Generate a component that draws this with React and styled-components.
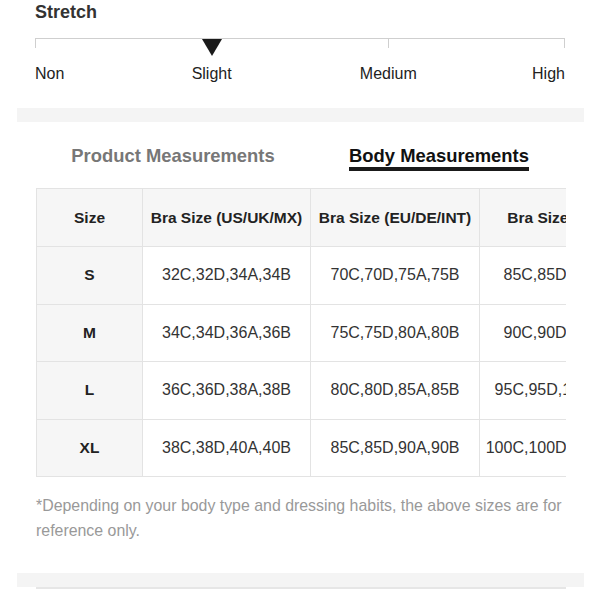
import React from "react";
import styled, { createGlobalStyle } from "styled-components";

const Global = createGlobalStyle`
  html, body { margin: 0; padding: 0; background: #fff; }
  body { font-family: "Liberation Sans", Arial, sans-serif; color: #222; }
`;

const Page = styled.div`
  width: 600px;
  height: 600px;
  overflow: hidden;
  display: flex;
  flex-direction: column;
`;

const StretchSection = styled.section`
  padding: 2px 35px 0 35px;
  display: flex;
  flex-direction: column;
`;

const Title = styled.h2`
  margin: 0;
  font-size: 18px;
  line-height: 20px;
  font-weight: bold;
  color: #333;
`;

const Scale = styled.div`
  position: relative;
  margin-top: 16px;
  display: grid;
  grid-template-columns: repeat(3, 1fr);
  height: 18px;
`;

const Segment = styled.div`
  height: 9px;
  border-top: 1px solid #cfcfcf;
  border-left: 1px solid #cfcfcf;
  border-right: ${(p) => (p.$last ? "1px solid #cfcfcf" : "none")};
`;

const Marker = styled.div`
  position: absolute;
  top: 1px;
  left: ${(p) => p.$pos};
  transform: translateX(-50%);
  width: 0;
  height: 0;
  border-left: 10px solid transparent;
  border-right: 10px solid transparent;
  border-top: 17px solid #1a1a1a;
`;

const Labels = styled.div`
  display: flex;
  justify-content: space-between;
  margin-top: 8px;
  height: 20px;
`;

const Label = styled.div`
  width: 0;
  display: flex;
  justify-content: ${(p) => p.$align};
  white-space: nowrap;
  font-size: 16px;
  line-height: 20px;
  color: #222;
`;

const Band = styled.div`
  margin: ${(p) => p.$mt}px 16px 0 17px;
  height: 14px;
  background: #f4f4f4;
  flex-shrink: 0;
`;

const Tabs = styled.div`
  display: flex;
  margin-top: 23px;
  height: 26px;
`;

const Tab = styled.div`
  position: relative;
  width: ${(p) => p.$w}px;
  display: flex;
  justify-content: center;
`;

const TabText = styled.span`
  font-size: 18.4px;
  line-height: 22px;
  font-weight: bold;
  color: ${(p) => (p.$active ? "#111" : "#777")};
  padding-bottom: 1px;
  border-bottom: ${(p) => (p.$active ? "4px solid #1a1a1a" : "4px solid transparent")};
`;

const TableClip = styled.div`
  margin: 17px 0 0 36px;
  width: 530px;
  overflow: hidden;
  flex-shrink: 0;
`;

const Table = styled.table`
  border-collapse: collapse;
  table-layout: fixed;
  width: 620px;
`;

const Th = styled.th`
  height: 57px;
  padding: 0;
  background: #f6f6f6;
  border: 1px solid #e3e3e3;
  font-size: 15.5px;
  font-weight: bold;
  color: #222;
  text-align: center;
  white-space: nowrap;
`;

const Td = styled.td`
  height: 56.5px;
  padding: 0;
  background: ${(p) => (p.$head ? "#f6f6f6" : "#fff")};
  border: 1px solid #e3e3e3;
  font-size: ${(p) => (p.$head ? "15.5px" : "16px")};
  font-weight: ${(p) => (p.$head ? "bold" : "normal")};
  color: ${(p) => (p.$head ? "#222" : "#333")};
  text-align: center;
  white-space: nowrap;
`;

const Note = styled.p`
  margin: 16px 0 0 36px;
  width: 535px;
  font-size: 15.9px;
  line-height: 25px;
  color: #999;
`;

const Rule = styled.div`
  margin: 0 34px 0 36px;
  height: 2px;
  background: #e6e6e6;
`;

const cols = [106, 168, 169, 177];
const headers = ["Size", "Bra Size (US/UK/MX)", "Bra Size (EU/DE/INT)", "Bra Size (FR/ES)"];
const rows = [
  ["S", "32C,32D,34A,34B", "70C,70D,75A,75B", "85C,85D,90A,90B"],
  ["M", "34C,34D,36A,36B", "75C,75D,80A,80B", "90C,90D,95A,95B"],
  ["L", "36C,36D,38A,38B", "80C,80D,85A,85B", "95C,95D,100A,100B"],
  ["XL", "38C,38D,40A,40B", "85C,85D,90A,90B", "100C,100D,105A,105B"],
];

export default function App() {
  return (
    <Page>
      <Global />
      <StretchSection>
        <Title>Stretch</Title>
        <Scale>
          <Segment />
          <Segment />
          <Segment $last />
          <Marker $pos="33.333%" />
        </Scale>
        <Labels>
          <Label $align="flex-start">Non</Label>
          <Label $align="center">Slight</Label>
          <Label $align="center">Medium</Label>
          <Label $align="flex-end">High</Label>
        </Labels>
      </StretchSection>
      <Band $mt={24} />
      <Tabs>
        <Tab $w={346}>
          <TabText>Product Measurements</TabText>
        </Tab>
        <Tab $w={186}>
          <TabText $active>Body Measurements</TabText>
        </Tab>
      </Tabs>
      <TableClip>
        <Table>
          <colgroup>
            {cols.map((w, i) => (
              <col key={i} style={{ width: w }} />
            ))}
          </colgroup>
          <thead>
            <tr>
              {headers.map((h) => (
                <Th key={h}>{h}</Th>
              ))}
            </tr>
          </thead>
          <tbody>
            {rows.map((r) => (
              <tr key={r[0]}>
                {r.map((c, i) => (
                  <Td key={i} $head={i === 0}>
                    {c}
                  </Td>
                ))}
              </tr>
            ))}
          </tbody>
        </Table>
      </TableClip>
      <Note>
        *Depending on your body type and dressing habits, the above sizes are for reference only.
      </Note>
      <Band $mt={30} />
      <Rule />
    </Page>
  );
}
